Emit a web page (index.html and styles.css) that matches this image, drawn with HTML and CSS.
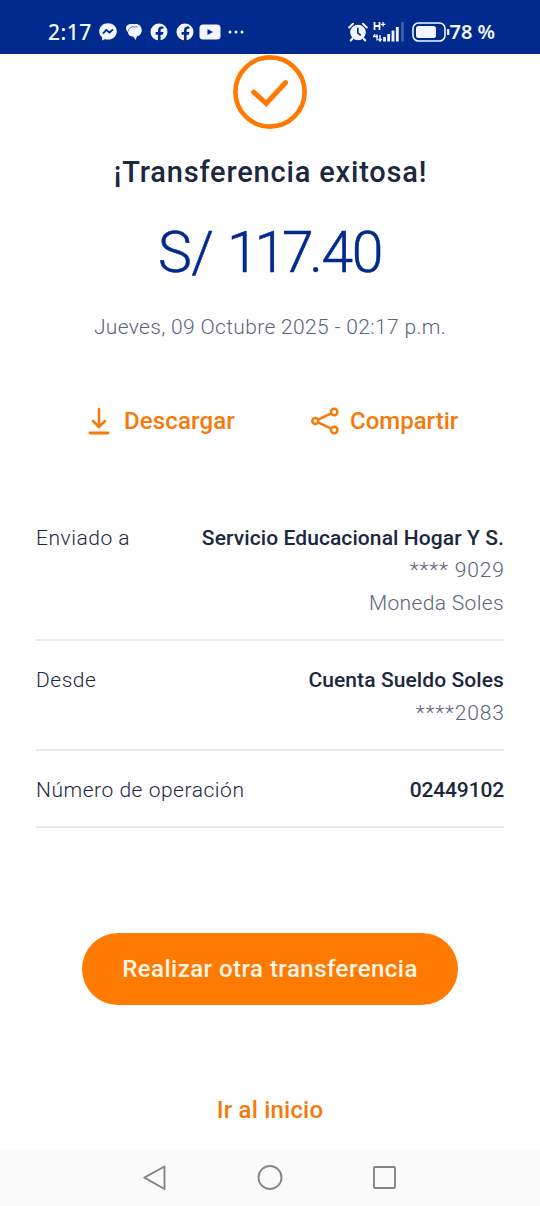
FILE: index.html
```html
<!DOCTYPE html>
<html lang="es">
<head>
<meta charset="utf-8">
<title>Transferencia exitosa</title>
<link rel="stylesheet" href="styles.css">
</head>
<body>
<header class="status">
  <div class="status-left">
    <span class="clock">2:17</span>
    <svg class="ic-messenger" width="18" height="18" viewBox="0 0 18 18"><path fill="#f3f6ff" d="M9 .2C4 .2.2 3.7.2 8.3c0 2.500 1.100 4.600 2.900 6.100v3.100l2.700-1.300c1 .3 2.100.4 3.200.4 5 0 8.800-3.600 8.800-8.300S14 .2 9 .2z"/><path d="M4 10.600L7.200 7l3.300 2.500L14 6.400" fill="none" stroke="#002a8d" stroke-width="1.800"/></svg>
    <svg class="ic-chat" width="18" height="18" viewBox="0 0 18 18"><path fill="#f3f6ff" d="M1 4.500C1.500 2.500 3.300 1 6 1h5c3 0 5.500 2.500 5.700 6 .2 3.500-2 6-4.700 6.300L10.500 17l-2-3.300C5 13.500 3.200 12 3 9.500 1.600 8 .7 6.200 1 4.500z"/><path d="M3 8.500c.3-2.500 2-4.300 4.700-4.700h5" fill="none" stroke="#002a8d" stroke-width=".6"/></svg>
    <svg class="ic-fb" width="18" height="18" viewBox="0 0 18 18"><circle cx="9" cy="9" r="8.500" fill="#f3f6ff"/><path fill="#002a8d" d="M8 18v-6.300H5.600V9H8V7.300c0-2.600 1.400-3.900 3.700-3.900h1.700v2.400h-1.200c-1.200 0-1.600.6-1.600 1.600V9h2.800l-.5 2.700h-2.300V18z"/></svg>
    <svg class="ic-fb" width="18" height="18" viewBox="0 0 18 18"><circle cx="9" cy="9" r="8.500" fill="#f3f6ff"/><path fill="#002a8d" d="M8 18v-6.300H5.600V9H8V7.300c0-2.600 1.400-3.900 3.700-3.900h1.700v2.400h-1.200c-1.200 0-1.600.6-1.600 1.600V9h2.800l-.5 2.700h-2.300V18z"/></svg>
    <svg class="ic-video" width="22" height="16" viewBox="0 0 22 16"><rect x=".5" y=".5" width="21" height="15" rx="3.500" fill="#f3f6ff"/><path d="M8.500 5l5.500 3-5.500 3z" fill="#002a8d"/></svg>
    <svg class="ic-dots" width="16" height="4" viewBox="0 0 16 4"><g fill="#f3f6ff"><circle cx="2" cy="2" r="1.500"/><circle cx="8" cy="2" r="1.500"/><circle cx="14" cy="2" r="1.500"/></g></svg>
  </div>
  <div class="status-right">
    <svg width="20" height="20" viewBox="0 0 20 20"><circle cx="10" cy="10.500" r="7.800" fill="#f3f6ff"/><path d="M1.200 5.500L5 1.800M18.800 5.500L15 1.800M4.500 16.500l-1.700 2M15.500 16.500l1.700 2" stroke="#f3f6ff" stroke-width="2" stroke-linecap="round"/><path d="M9.800 5.800v5l3 2.500" fill="none" stroke="#002a8d" stroke-width="1.600"/></svg>
    <svg class="ic-signal" width="32" height="21" viewBox="0 0 32 21"><g fill="none" stroke="#f3f6ff"><path d="M1.500 1v8M6.500 1v8M1.500 5h5" stroke-width="1.800"/><path d="M7.800 3.300h4.600M10.100 1v4.600" stroke-width="1.300"/><path d="M0 15.500h5M2.200 13.300L.4 15.500M4 13.500v6M7 14v6M5.500 18l1.500 2 1.500-2" stroke-width="1.400"/><path d="M11.500 16v4.500M15.700 13v7.500M20 9.500v11M24.300 6v14.500" stroke-width="2.800"/></g><path d="M29.500 1v19.500" stroke="#405fac" stroke-width="2.800"/></svg>
    <svg class="ic-battery" width="38" height="20" viewBox="0 0 38 20"><rect x="1" y="1" width="32" height="18" rx="5.500" fill="none" stroke="#f3f6ff" stroke-width="1.600"/><rect x="4" y="4" width="20" height="12" rx="2.500" fill="#f3f6ff"/><path d="M36.200 7v6" stroke="#f3f6ff" stroke-width="2.200"/></svg>
    <span class="percent">78 %</span>
  </div>
</header>

<main class="receipt">
  <svg class="check" width="76" height="76" viewBox="0 0 76 76" fill="none" stroke="#ff7800"><circle cx="38" cy="38" r="34.600" stroke-width="4.600"/><path d="M21.700 38.200L34.200 49.500 53.500 28.700" stroke-width="5" stroke-linecap="round"/></svg>
  <h1 class="title">¡Transferencia exitosa!</h1>
  <p class="amount"><span class="currency">S/</span> <span class="whole">117</span><span class="cents">.40</span></p>
  <p class="date">Jueves, 09 Octubre 2025 - 02:17 p.m.</p>

  <div class="actions">
    <a class="action">
      <svg width="22" height="28" viewBox="0 0 22 28" fill="none" stroke="#f47a0b" stroke-width="2.500" stroke-linecap="round"><path d="M11 2v17.500M5 14l6 6 6-6"/><path d="M2 26h18" stroke-width="2.900"/></svg>
      <span>Descargar</span>
    </a>
    <a class="action share">
      <svg width="28" height="28" viewBox="0 0 28 28" fill="none" stroke="#f47a0b" stroke-width="2.500"><circle cx="4.300" cy="14" r="3"/><circle cx="23.200" cy="5" r="3.200"/><circle cx="23.200" cy="23" r="3.200"/><path d="M7 12.700L20.300 6.400M7 15.300l13.300 6.300"/></svg>
      <span>Compartir</span>
    </a>
  </div>

  <section class="details">
    <div class="row">
      <span class="key">Enviado a</span>
      <div class="value"><strong>Servicio Educacional Hogar Y S.</strong><span class="account">**** 9029</span><span class="currency-name">Moneda Soles</span></div>
    </div>
    <div class="row">
      <span class="key">Desde</span>
      <div class="value"><strong>Cuenta Sueldo Soles</strong><span class="account">****2083</span></div>
    </div>
    <div class="row">
      <span class="key">Número de operación</span>
      <div class="value"><strong class="number">02449102</strong></div>
    </div>
  </section>

  <button class="primary">Realizar otra transferencia</button>
  <a class="home">Ir al inicio</a>
</main>

<nav class="navbar">
  <svg width="24" height="26" viewBox="0 0 24 26"><path d="M21.500 1.500v22.500L1.300 12.700z"/></svg>
  <svg width="26" height="26" viewBox="0 0 26 26"><circle cx="13" cy="12.500" r="11.500"/></svg>
  <svg width="24" height="26" viewBox="0 0 24 26"><rect x="1" y="2" width="21" height="21" rx="1"/></svg>
</nav>
</body>
</html>
```
FILE: styles.css
```css
* { box-sizing: border-box; }

body {
  margin: 0;
  width: 540px;
  height: 1206px;
  display: flex;
  flex-direction: column;
  background: #fefefe;
  color: #1b2840;
  font-family: Roboto, "Noto Sans", sans-serif;
  overflow: hidden;
}

h1, p { margin: 0; font-weight: inherit; }
svg { display: block; flex: none; }

.status {
  height: 54px;
  flex: none;
  padding: 9px 45px 0 48px;
  display: flex;
  justify-content: space-between;
  align-items: center;
  background: #002a8d;
  color: #f3f6ff;
  font-family: "Noto Sans", sans-serif;
  font-weight: 500;
  font-size: 21px;
}
.status-left, .status-right { display: flex; align-items: center; }
.clock { width: 51px; letter-spacing: 0.5px; }
.ic-chat { margin-left: 8px; }
.ic-fb { margin-left: 7px; }
.ic-fb + .ic-fb { margin-left: 8px; }
.ic-video { margin-left: 5px; }
.ic-dots { margin-left: 7px; }
.ic-signal { margin-left: 5px; }
.ic-battery { margin-left: 7px; }
.percent { white-space: nowrap; font-size: 20px; font-weight: 600; letter-spacing: -0.05px; }

.receipt {
  flex: 1;
  display: flex;
  flex-direction: column;
  align-items: center;
}
.check { height: 76px; }
.title {
  margin-top: 24px;
  padding-left: 1px;
  line-height: 36px;
  font-size: 29px;
  font-weight: 500;
  letter-spacing: 0.82px;
}
.amount {
  margin-top: 25px;
  line-height: 76px;
  font-size: 57px;
  font-weight: 300;
  color: #002a8d;
  -webkit-text-stroke: 0.5px #002a8d;
}
.currency { letter-spacing: -0.6px; }
.whole { letter-spacing: -4.2px; }
.cents { letter-spacing: -1.4px; }
.date {
  margin-top: 22px;
  line-height: 28px;
  font-size: 21px;
  font-weight: 300;
  letter-spacing: 0.34px;
  color: #5c6579;
}

.actions {
  align-self: stretch;
  margin-top: 66px;
  padding-left: 88px;
  display: flex;
  line-height: 28px;
  font-size: 24px;
  font-weight: 500;
  color: #f47a0b;
}
.action { display: flex; align-items: center; gap: 14px; width: 223px; letter-spacing: 0.15px; }
.share { gap: 11px; width: auto; letter-spacing: 0; }

.details {
  width: 468px;
  margin-top: 64px;
}
.row {
  display: flex;
  justify-content: space-between;
  padding: 23px 0 20px;
  border-bottom: 2px solid #e8e8ea;
  line-height: 32.4px;
  font-size: 21px;
  font-weight: 300;
}
.key { letter-spacing: 0.53px; }
.value { display: flex; flex-direction: column; align-items: flex-end; color: #5c6579; }
.value strong { font-weight: 500; color: #1b2840; letter-spacing: 0.09px; }
.value .number { letter-spacing: -0.15px; }
.account { letter-spacing: 0.85px; margin-right: -0.85px; }
.currency-name { letter-spacing: 0.35px; }

.primary {
  margin-top: 105px;
  width: 376px;
  height: 72px;
  padding: 0;
  border: 0;
  border-radius: 36px;
  background: #ff7a00;
  color: #fff6e8;
  font: 500 24px/72px Roboto, sans-serif;
  letter-spacing: 0.47px;
}
.home {
  margin-top: 89px;
  line-height: 32px;
  font-size: 24px;
  font-weight: 500;
  letter-spacing: 0.2px;
  color: #f47a0b;
}

.navbar {
  height: 56px;
  flex: none;
  display: flex;
  justify-content: center;
  align-items: center;
  gap: 90px;
  background: #fafafa;
}
.navbar svg { fill: none; stroke: #858585; stroke-width: 1.9; stroke-linejoin: round; }
```
